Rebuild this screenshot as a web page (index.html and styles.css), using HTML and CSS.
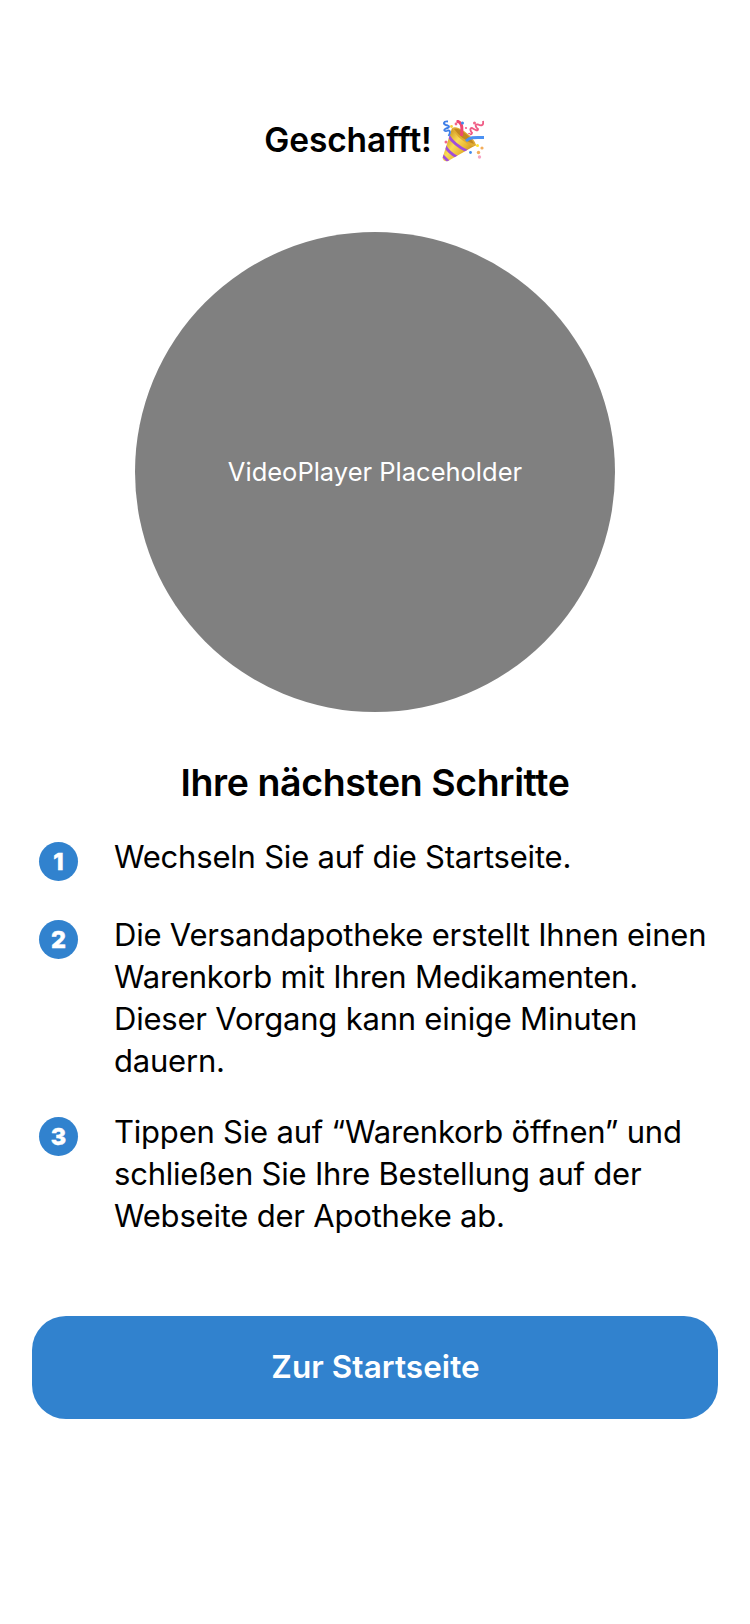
FILE: index.html
```html
<!DOCTYPE html>
<html lang="de">
<head>
<meta charset="utf-8">
<title>Geschafft!</title>
<link rel="stylesheet" href="styles.css">
</head>
<body>
<main class="screen">
  <h1 class="title"><span class="title-text">Geschafft!</span>
    <svg class="popper" viewBox="0 0 42 42" aria-hidden="true">
      <defs>
        <linearGradient id="gold" x1="0" y1="0.3" x2="0.8" y2="0.9">
          <stop offset="0" stop-color="#c98f1c"/>
          <stop offset="0.4" stop-color="#fbdc55"/>
          <stop offset="0.7" stop-color="#e9b832"/>
          <stop offset="1" stop-color="#bd8018"/>
        </linearGradient>
        <clipPath id="cone"><path d="M10 8 L34 25 L6 41 Q1.500 42 0.500 38 Z"/></clipPath>
      </defs>
      <path d="M10 8 L34 25 L6 41 Q1.500 42 0.500 38 Z" fill="url(#gold)"/>
      <g clip-path="url(#cone)" fill="none" stroke="#a04fd8" stroke-width="2.800">
        <path d="M6 15 Q12 25 25 31"/>
        <path d="M3 26 Q7 33 15 37"/>
        <path d="M0 35 Q3 38 7 42"/>
      </g>
      <path d="M10 8 Q14 5.500 22 11 Q32 18 34 25 Q32 28 26 24 Q14 17 10 8 Z" fill="#e0ab33"/>
      <path d="M12 9 Q17 8 24 14 Q30 19 32 24 Q20 20 12 9 Z" fill="#c18820"/>
      <path d="M14.500 1 C20 2 20.500 6 19.500 16" fill="none" stroke="#ef4672" stroke-width="3"/>
      <path d="M24 21 C29 16.500 33 17.500 42 17.500" fill="none" stroke="#4b91f2" stroke-width="3"/>
      <path d="M6 1.500 C1 1 1 4 4 5 C8 6 8 7.500 4 8.500 C.5 10 3 12 6 10.500 C9 10 8 14 6.500 16" fill="none" stroke="#3f7fe8" stroke-width="1.900"/>
      <path d="M41 1 C42 6 39 6 36 4.500 C32 3.500 34 8 36 9 C36 12 32 9 30 8 C27 8 29 12 30 13 C29 16 27 13 27 14" fill="none" stroke="#ef5c85" stroke-width="1.900"/>
      <g fill="#f2668a"><circle cx="14" cy="4" r="1.400"/><circle cx="32.500" cy="3" r="1.500"/><circle cx="4" cy="22" r="1.500"/><circle cx="24" cy="8" r="1.100"/></g>
      <g fill="#408bed"><circle cx="20.500" cy="3" r="1.500"/><circle cx="28.500" cy="32.500" r="1.400"/></g>
      <g fill="#f3ad5b"><circle cx="40" cy="28" r="1.600"/><circle cx="36.500" cy="32.500" r="1.700"/></g>
      <circle cx="9.500" cy="6.500" r="1.400" fill="#f6cf3c"/>
      <circle cx="35.500" cy="25.500" r="1.500" fill="#ffe32e"/>
      <circle cx="37.500" cy="37" r="1.700" fill="#f7a5c5"/>
    </svg>
  </h1>
  <div class="player"><span class="player-label">VideoPlayer Placeholder</span></div>
  <h2 class="subtitle">Ihre nächsten Schritte</h2>
  <ol class="steps">
    <li class="step"><span class="badge">1</span><p class="step-text">Wechseln Sie auf die Startseite.</p></li>
    <li class="step"><span class="badge">2</span><p class="step-text">Die Versandapotheke erstellt Ihnen einen<br>Warenkorb mit Ihren Medikamenten.<br>Dieser Vorgang kann einige Minuten<br>dauern.</p></li>
    <li class="step"><span class="badge">3</span><p class="step-text">Tippen Sie auf “Warenkorb öffnen” und<br>schließen Sie Ihre Bestellung auf der<br>Webseite der Apotheke ab.</p></li>
  </ol>
  <button class="cta" type="button">Zur Startseite</button>
</main>
</body>
</html>
```
FILE: styles.css
```css
* { box-sizing: border-box; }
body { margin: 0; background: #fff; color: #000; font-family: Inter, "Liberation Sans", sans-serif; font-variant-ligatures: none; font-feature-settings: "calt" 0; }
.screen { width: 750px; height: 1624px; padding: 120px 32px 0; display: flex; flex-direction: column; align-items: center; }
.title { margin: 0; height: 42px; padding-right: 2px; display: flex; align-items: center; gap: 10px; font-size: 33.5px; line-height: 42px; font-weight: 600; white-space: nowrap; }
.title-text { letter-spacing: -0.1px; padding-bottom: 2px; }
.popper { width: 42px; height: 42px; display: block; }
.player { margin-top: 70px; width: 480px; height: 480px; flex: none; border-radius: 50%; background: #808080; color: #fff; display: flex; align-items: center; justify-content: center; }
.player-label { padding-bottom: 2px; font-size: 25.5px; letter-spacing: 0; white-space: nowrap; }
.subtitle { margin: 48px 0 0; font-size: 37.5px; line-height: 46px; font-weight: 600; letter-spacing: -0.4px; white-space: nowrap; }
.steps { align-self: stretch; list-style: none; margin: 30px 0 0; padding: 0 0 0 7px; display: flex; flex-direction: column; gap: 29px; }
.step { display: flex; align-items: flex-start; gap: 36px; }
.badge { flex: none; width: 39px; height: 39px; margin: 6px 0 4px; border-radius: 50%; background: #3182ce; color: #fff; font-size: 23.5px; line-height: 40px; font-weight: 800; text-align: center; -webkit-text-stroke: 0.5px #fff; }
.step-text { margin: 0; font-size: 31px; line-height: 42px; letter-spacing: -0.21px; white-space: nowrap; }
.cta { align-self: stretch; margin: 79px 0 0; height: 103px; padding: 0 0 2px 1px; border: 0; border-radius: 34px; background: #3182ce; color: #fff; font-family: inherit; font-size: 31.5px; line-height: 42px; font-weight: 600; letter-spacing: 0.05px; }
```
